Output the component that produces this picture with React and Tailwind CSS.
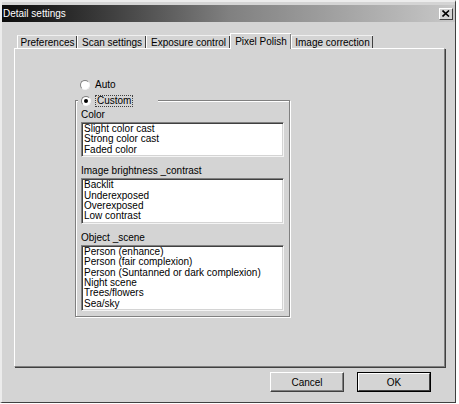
import React from "react";

const font = "font-['Liberation_Sans',Arial,sans-serif]";

function Radio({ checked }) {
  return (
    <span className="relative flex h-[10px] w-[10px] shrink-0 items-center justify-center rounded-full border border-t-[#808080] border-l-[#808080] border-r-[#f4f4f4] border-b-[#f4f4f4] bg-white">
      {checked && <span className="h-[4px] w-[4px] rounded-full bg-black" />}
    </span>
  );
}

function ListBox({ items }) {
  return (
    <div className="mt-[1px] border border-t-[#808080] border-l-[#808080] border-r-[#f4f4f4] border-b-[#f4f4f4] bg-white pl-[1px] shadow-[inset_1px_1px_0_#404040,inset_-1px_-1px_0_#d4d4d4] pt-[1px] pb-[1px]">
      {items.map((t) => (
        <div key={t} className="h-[10.4px] pl-[1px] text-[10px] leading-[10.4px] text-black whitespace-nowrap">
          {t}
        </div>
      ))}
    </div>
  );
}

function Tab({ label, w, selected }) {
  if (selected) {
    return (
      <div
        className={`relative z-10 mb-[-1px] flex h-[16px] items-center justify-center border-l border-t border-l-white border-t-white bg-[#d4d4d4] text-[10px] text-black shadow-[inset_-1px_0_0_#808080] ${w}`}
      >
        <span className="pb-[1px]">{label}</span>
      </div>
    );
  }
  return (
    <div
      className={`flex h-[13px] items-center justify-center border-l border-t border-l-white border-t-[#f0f0f0] text-[10px] text-black shadow-[inset_-1px_0_0_#404040] ${w}`}
    >
      <span>{label}</span>
    </div>
  );
}

export default function App() {
  return (
    <div className={`${font} h-[404px] w-[459px] bg-white`}>
      <div className="flex h-[403px] w-[456px] flex-col border-l-2 border-t-2 border-l-[#ececec] border-t-[#ececec] border-r border-b border-r-[#404040] border-b-[#404040] bg-[#d4d4d4] pt-[3px]">
        {/* Title bar */}
        <div className="flex h-[17px] items-center justify-between bg-gradient-to-r from-[#0c0c0c] via-[#808080] to-[#c8c8c8] pl-[1px] pr-[2px]">
          <span className="text-[10px] leading-[17px] text-white">Detail settings</span>
          <div className="flex h-[12px] w-[14px] items-center justify-center border border-t-white border-l-white border-r-[#404040] border-b-[#404040] bg-[#d4d4d4]">
            <svg width="8" height="7" viewBox="0 0 8 7">
              <path d="M0.5 0.5 L7 6.5 M7 0.5 L0.5 6.5" stroke="#000" strokeWidth="1.6" />
            </svg>
          </div>
        </div>

        {/* Tabs */}
        <div className="ml-[15px] mt-[11px] flex h-[15px] items-end">
          <Tab label="Preferences" w="w-[60px]" />
          <Tab label="Scan settings" w="w-[69px]" />
          <Tab label="Exposure control" w="w-[84px]" />
          <Tab label="Pixel Polish" w="w-[61px]" selected />
          <Tab label="Image correction" w="w-[82px]" />
        </div>

        {/* Tab panel */}
        <div className="ml-[12px] flex h-[319px] w-[431px] flex-col border-l border-t border-l-white border-t-white border-r border-b border-r-[#808080] border-b-[#808080] shadow-[1px_1px_0_#404040] pl-[60px] pt-[29px]">
          <div className="ml-[5px] flex h-[13px] items-center gap-[5px] text-[10px] text-black">
            <Radio />
            <span>Auto</span>
          </div>

          {/* Group box */}
          <div className="relative mt-[9px] w-[215px] border border-[#808080] shadow-[1px_1px_0_#ffffff,inset_1px_1px_0_#ffffff] px-[5px] pt-[7px] pb-[5px]">
            <div className="absolute left-[2px] top-[-7px] flex h-[13px] w-[80px] items-center gap-[4px] bg-[#d4d4d4] pl-[3px] text-[10px] text-black">
              <Radio checked />
              <span className="border border-dotted border-[#404040] px-[1px] leading-[10px]">Custom</span>
            </div>

            <div className="h-[13px] text-[10px] leading-[13px] text-black">Color</div>
            <ListBox items={["Slight color cast", "Strong color cast", "Faded color"]} />

            <div className="mt-[7px] h-[13px] text-[10px] leading-[13px] text-black">Image brightness _contrast</div>
            <ListBox items={["Backlit", "Underexposed", "Overexposed", "Low contrast"]} />

            <div className="mt-[7px] h-[13px] text-[10px] leading-[13px] text-black">Object _scene</div>
            <ListBox
              items={[
                "Person (enhance)",
                "Person (fair complexion)",
                "Person (Suntanned or dark complexion)",
                "Night scene",
                "Trees/flowers",
                "Sea/sky",
              ]}
            />
          </div>
        </div>

        {/* Buttons */}
        <div className="mt-[5px] flex justify-end gap-[13px] pr-[24px]">
          <div className="flex h-[20px] w-[74px] items-center justify-center border border-t-white border-l-white border-r-[#404040] border-b-[#404040] shadow-[inset_-1px_-1px_0_#808080] text-[10px] text-black">
            Cancel
          </div>
          <div className="flex h-[20px] w-[74px] items-center justify-center border border-black">
            <div className="flex h-full w-full items-center justify-center border border-t-white border-l-white border-r-[#404040] border-b-[#404040] text-[10px] text-black">
              OK
            </div>
          </div>
        </div>
      </div>
    </div>
  );
}
